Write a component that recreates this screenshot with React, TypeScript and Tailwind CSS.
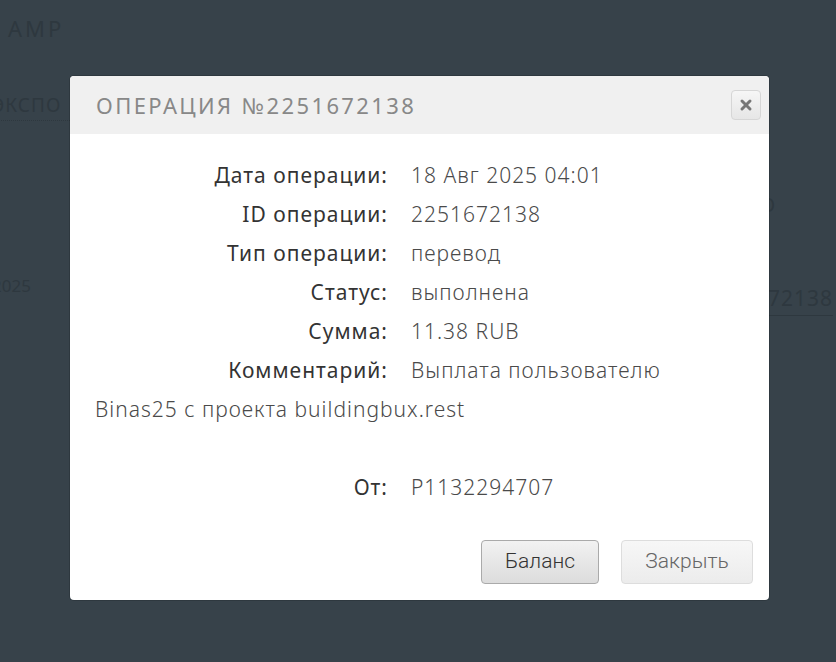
import { X } from 'lucide-react'

const rows = [
  { label: 'Дата операции:', value: '18 Авг 2025 04:01' },
  { label: 'ID операции:', value: '2251672138' },
  { label: 'Тип операции:', value: 'перевод' },
  { label: 'Статус:', value: 'выполнена' },
  { label: 'Сумма:', value: '11.38 RUB' },
  { label: 'Комментарий:', value: 'Выплата пользователю Binas25 с проекта buildingbux.rest' },
]

export default function App() {
  return (
    <div className="relative w-[836px] h-[662px] overflow-hidden bg-[#37424a]" style={{ fontFamily: '"Noto Sans", sans-serif' }}>
      {/* page behind the overlay */}
      <div className="text-[#2e383f]">
        <div className="pl-2 pt-3 text-[22px] tracking-[3px]">AMP</div>
        <div className="mt-[46px] -ml-2 text-[19px] tracking-[1px] border-b border-dotted border-[#2e383f] w-[80px]">ЭКСПО</div>
        <div className="mt-[152px] -ml-2 text-[17px]">2025</div>
      </div>
      <div className="absolute left-[760px] top-[190px] text-[20px] text-[#2e383f]">О</div>
      <div className="absolute left-[768px] top-[283px] text-[21px] tracking-[1px] text-[#2e383f] border-b border-[#2e383f]">72138</div>

      {/* modal */}
      <div className="absolute left-[70px] top-[76px] w-[699px] h-[524px] bg-white rounded-[4px] shadow-[0_0_0_1px_rgba(0,0,0,0.15)] overflow-hidden">
        <div className="h-[58px] bg-[#f0f0f0] flex items-center justify-between pl-[26px] pr-[8px]">
          <h2 className="text-[22px] tracking-[2.4px] text-[#888]">ОПЕРАЦИЯ №2251672138</h2>
          <button className="w-[30px] h-[30px] rounded-[4px] border border-[#d6d6d6] bg-gradient-to-b from-[#f6f6f6] to-[#e6e6e6] flex items-center justify-center">
            <X className="w-[16px] h-[16px] text-[#777]" strokeWidth={4.5} />
          </button>
        </div>
        <div className="px-[25px] pt-[22px] text-[21px] leading-[39px] text-[#4a4a4a] font-light tracking-[1px]">
          {rows.map(r => (
            <div key={r.label}>
              <span className="inline-block w-[293px] text-right text-[#333] font-normal mr-[23px]">{r.label}</span>
              {r.value}
            </div>
          ))}
          <div className="h-[39px]" />
          <div>
            <span className="inline-block w-[293px] text-right text-[#333] font-normal mr-[23px]">От:</span>
            P1132294707
          </div>
        </div>
        <div className="absolute right-[16px] bottom-[16px] flex gap-[22px]" style={{ fontFamily: 'Roboto, sans-serif' }}>
          <button className="w-[118px] h-[44px] rounded-[4px] border border-[#aaa] bg-gradient-to-b from-[#f2f2f2] to-[#dcdcdc] text-[21px] font-light text-[#333]">Баланс</button>
          <button className="w-[132px] h-[44px] rounded-[4px] border border-[#ddd] bg-gradient-to-b from-[#f7f7f7] to-[#ececec] text-[21px] font-light text-[#666]">Закрыть</button>
        </div>
      </div>
    </div>
  )
}
